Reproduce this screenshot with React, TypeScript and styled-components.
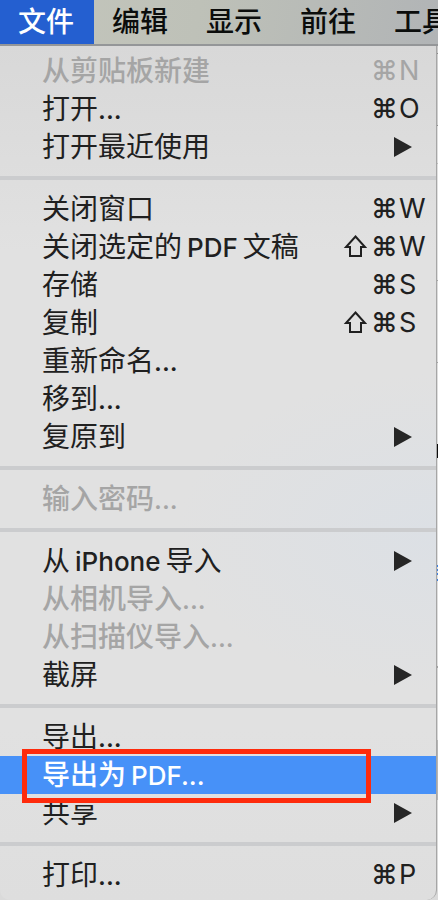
import React from "react";
import styled, { createGlobalStyle } from "styled-components";

const GlobalStyle = createGlobalStyle`
  * { box-sizing: border-box; }
  body {
    margin: 0;
    background: #dcdcdc;
    overflow: hidden;
    font-family: Inter, "Noto Sans CJK SC", sans-serif;
  }
  button {
    margin: 0;
    border: 0;
    background: none;
    font: inherit;
    text-align: left;
    white-space: nowrap;
  }
`;

const Desktop = styled.div`
  background: linear-gradient(
    #c9c9c9 0 53px, #8a8a8a 53px 54px, #cfcfcf 54px 125px, #929292 125px 126px,
    #dedede 126px 163px, #bcbcbc 163px 164px, #e0e0e0 164px 280px, #a5a5a5 280px 281px,
    #dcdcdc 281px 362px, #a2a2a2 362px 363px, #dedede 363px 444px, #0c0c0c 444px 458px,
    #e0e0e0 458px 565px, #3f7fe0 565px 567px, #e0e0e0 567px 569px, #3f7fe0 569px 571px,
    #e0e0e0 571px 573px, #3f7fe0 573px 575px, #e0e0e0 575px 579px, #3f7fe0 579px 581px,
    #dedede 581px 666px, #a2a2a2 666px 668px, #d8d8d8 668px 740px, #b5b5b5 740px 800px,
    #dadada 800px
  );
`;

const MenuBar = styled.nav`
  display: flex;
  height: 46px;
  overflow: hidden;
  border-bottom: 2px solid #949698;
  background: linear-gradient(100deg, #c4c6bc, #bec1b8 45%, #b1b4b6);
`;

const BarButton = styled.button<{ $open?: boolean }>`
  flex: none;
  padding: 0 20px 0 18px;
  font-size: 28px;
  line-height: 44px;
  color: ${(p) => (p.$open ? "#fff" : "#0b0d0c")};
  && {
    font-weight: 500;
    background: ${(p) => (p.$open ? "#245fd0" : "transparent")};
  }
`;

const Menu = styled.div`
  margin-right: 1px;
  padding: 6px 0;
  border-right: 1px solid #a6a6a6;
  border-radius: 0 0 10px 10px;
  background:
    radial-gradient(ellipse 260px 160px at 100% 57%, #dce0e5, #dce0e500),
    linear-gradient(#d8d8d8, #e1e1e1 24%, #e1e1e1 80%, #dedede);
`;

const Separator = styled.hr`
  height: 4px;
  margin: 10px 0;
  border: 0;
  background: #cbccce;
`;

const ItemButton = styled.button<{ $active?: boolean }>`
  position: relative;
  display: flex;
  align-items: center;
  justify-content: space-between;
  width: 100%;
  height: 38px;
  padding: 0 0 0 42px;
  font-size: 28px;
  line-height: 38px;
  color: ${(p) => (p.$active ? "#fff" : "#202020")};
  && {
    font-weight: ${(p) => (p.$active ? 500 : 400)};
    background: ${(p) => (p.$active ? "#4791f8" : "transparent")};
  }
  &&:disabled {
    font-weight: 500;
    color: #a5a5a5;
  }
`;

const Latin = styled.span<{ $before?: boolean; $after?: boolean }>`
  margin-left: ${(p) => (p.$before ? "5px" : "0")};
  margin-right: ${(p) => (p.$after ? "5px" : "0")};
  font-size: 26px;
  font-weight: 500;
`;

const Shortcut = styled.span`
  display: grid;
  grid-template-columns: 28px 28px 37px;
  font-size: 27px;
  font-weight: 400;
`;

const Command = styled.span`
  font-weight: 500;
`;

const ShiftIcon = styled.svg`
  align-self: center;
  width: 24px;
  height: 24px;
  fill: none;
  stroke: currentColor;
  stroke-width: 2;
`;

const Arrow = styled.svg`
  width: 18px;
  height: 20px;
  margin-right: 24px;
  fill: #262626;
`;

const Highlight = styled.span`
  position: absolute;
  z-index: 1;
  top: -7px;
  right: 65px;
  bottom: -9px;
  left: 22px;
  border: 5px solid #fe2b0c;
  pointer-events: none;
`;

type Item = {
  label: string;
  keys?: string;
  shift?: boolean;
  submenu?: boolean;
  disabled?: boolean;
  active?: boolean;
};

const groups: Item[][] = [
  [
    { label: "从剪贴板新建", keys: "N", disabled: true },
    { label: "打开...", keys: "O" },
    { label: "打开最近使用", submenu: true },
  ],
  [
    { label: "关闭窗口", keys: "W" },
    { label: "关闭选定的PDF文稿", keys: "W", shift: true },
    { label: "存储", keys: "S" },
    { label: "复制", keys: "S", shift: true },
    { label: "重新命名..." },
    { label: "移到..." },
    { label: "复原到", submenu: true },
  ],
  [{ label: "输入密码...", disabled: true }],
  [
    { label: "从iPhone导入", submenu: true },
    { label: "从相机导入...", disabled: true },
    { label: "从扫描仪导入...", disabled: true },
    { label: "截屏", submenu: true },
  ],
  [
    { label: "导出..." },
    { label: "导出为PDF...", active: true },
    { label: "共享", submenu: true },
  ],
  [{ label: "打印...", keys: "P" }],
];

function Label({ text }: { text: string }) {
  const parts = text.split(/([A-Za-z.]+)/).filter(Boolean);
  return (
    <span>
      {parts.map((part, i) =>
        /^[A-Za-z.]/.test(part) ? (
          <Latin key={i} $before={part[0] !== "."} $after={i < parts.length - 1}>
            {part}
          </Latin>
        ) : (
          part
        )
      )}
    </span>
  );
}

function Keys({ letter, shift }: { letter: string; shift?: boolean }) {
  return (
    <Shortcut>
      {shift ? (
        <ShiftIcon viewBox="0 0 24 24" role="img" aria-label="Shift">
          <path d="M12.500 1.500 22 12H18V21H7V12H3z" />
        </ShiftIcon>
      ) : (
        <span />
      )}
      <Command>⌘</Command>
      <span>{letter}</span>
    </Shortcut>
  );
}

function MenuItem({ label, keys, shift, submenu, disabled, active }: Item) {
  return (
    <ItemButton role="menuitem" disabled={disabled} $active={active}>
      <Label text={label} />
      {keys && <Keys letter={keys} shift={shift} />}
      {submenu && (
        <Arrow viewBox="0 0 18 20" aria-hidden="true">
          <path d="M0 0 18 10 0 20z" />
        </Arrow>
      )}
      {active && <Highlight />}
    </ItemButton>
  );
}

export default function App() {
  return (
    <Desktop>
      <GlobalStyle />
      <MenuBar>
        {["文件", "编辑", "显示", "前往", "工具"].map((name, i) => (
          <BarButton key={name} $open={i === 0}>
            {name}
          </BarButton>
        ))}
      </MenuBar>
      <Menu role="menu" aria-label="文件">
        {groups.map((items, g) => (
          <React.Fragment key={g}>
            {g > 0 && <Separator />}
            {items.map((item) => (
              <MenuItem key={item.label} {...item} />
            ))}
          </React.Fragment>
        ))}
      </Menu>
    </Desktop>
  );
}
